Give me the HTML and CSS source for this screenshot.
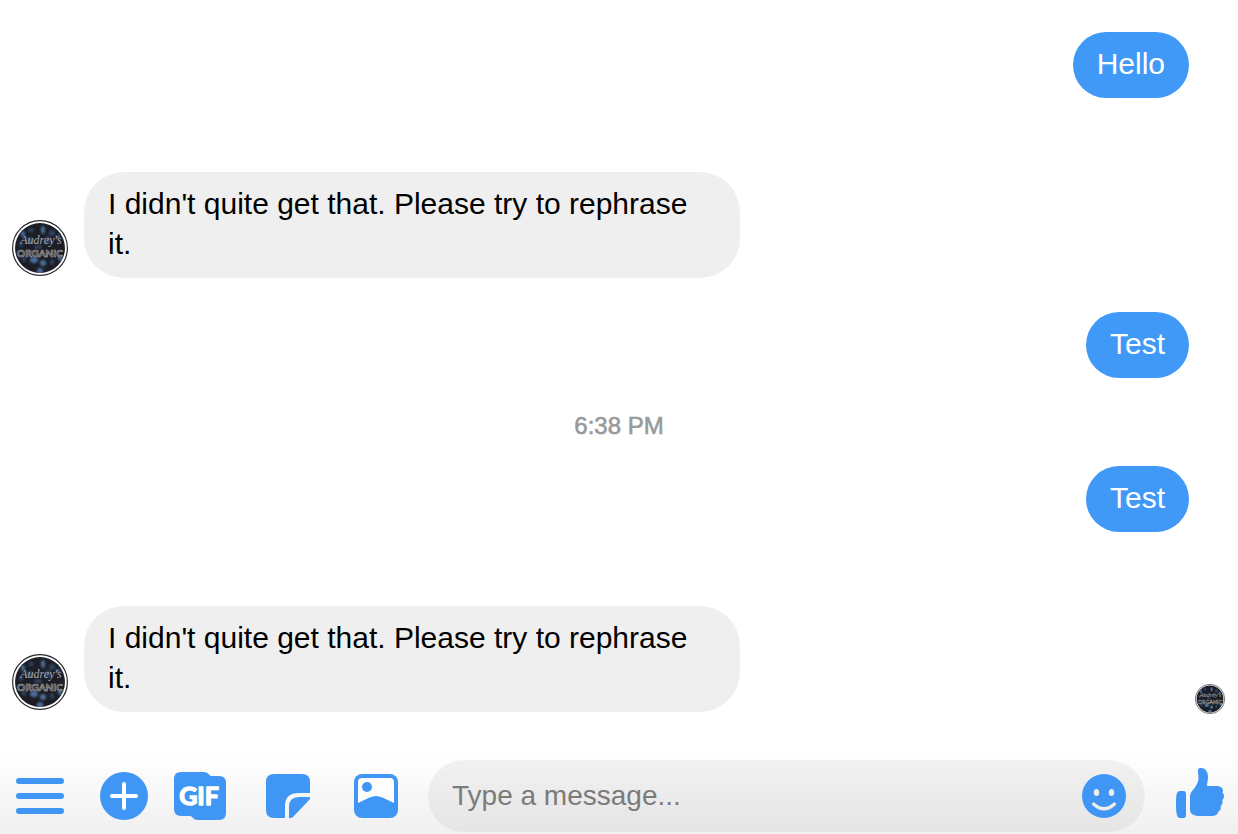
FILE: index.html
```html
<!DOCTYPE html>
<html lang="en">
<head>
<meta charset="utf-8">
<meta name="viewport" content="width=device-width, initial-scale=1">
<title>Messages</title>
<link rel="stylesheet" href="styles.css">
</head>
<body>
<svg class="defs" aria-hidden="true">
  <defs>
    <filter id="soft"><feGaussianBlur stdDeviation="1.1"/></filter>
    <clipPath id="disc"><circle cx="28" cy="28" r="25"/></clipPath>
    <symbol id="avatar" viewBox="0 0 56 56">
      <circle cx="28" cy="28" r="27.4" fill="#fff" stroke="#26272c" stroke-width="1.2"/>
      <circle cx="28" cy="28" r="25" fill="#1c1d25"/>
      <g clip-path="url(#disc)">
        <g filter="url(#soft)" fill="#4b6f9c">
          <ellipse cx="11" cy="14" rx="2" ry="3"/>
          <ellipse cx="19" cy="10" rx="3" ry="2" fill="#2d4361"/>
          <ellipse cx="31" cy="10" rx="2" ry="4"/>
          <ellipse cx="40" cy="13" rx="3" ry="3" fill="#2d4361"/>
          <ellipse cx="46" cy="17" rx="2" ry="2"/>
          <ellipse cx="9" cy="24" rx="2" ry="3" fill="#2d4361"/>
          <ellipse cx="18" cy="20" rx="3" ry="3" fill="#2d4361"/>
          <ellipse cx="36" cy="20" rx="3" ry="4" fill="#30415a"/>
          <ellipse cx="26" cy="27" rx="4" ry="2" fill="#30415a"/>
          <ellipse cx="22" cy="40" rx="4" ry="3"/>
          <ellipse cx="12" cy="39" rx="2" ry="3" fill="#2d4361"/>
          <ellipse cx="31" cy="43" rx="3" ry="3"/>
          <ellipse cx="40" cy="42" rx="2" ry="3" fill="#2d4361"/>
          <ellipse cx="28" cy="51" rx="3" ry="3"/>
          <ellipse cx="48" cy="38" rx="2" ry="3"/>
        </g>
        <text x="29" y="24" class="brand-script">Audrey's</text>
        <text x="28" y="37" class="brand-caps">ORGANIC</text>
      </g>
    </symbol>
  </defs>
</svg>

<div class="chat">
  <main class="thread">
    <div class="row row-out"><p class="bubble bubble-out">Hello</p></div>
    <div class="row row-in">
      <svg class="avatar" role="img" aria-label="Audrey's Organic"><use href="#avatar"/></svg>
      <p class="bubble bubble-in">I didn't quite get that. Please try to rephrase it.</p>
    </div>
    <div class="row row-out row-reply"><p class="bubble bubble-out">Test</p></div>
    <time class="stamp" datetime="18:38">6:38 PM</time>
    <div class="row row-out"><p class="bubble bubble-out">Test</p></div>
    <div class="row row-in">
      <svg class="avatar" role="img" aria-label="Audrey's Organic"><use href="#avatar"/></svg>
      <p class="bubble bubble-in">I didn't quite get that. Please try to rephrase it.</p>
      <svg class="seen" role="img" aria-label="Seen"><use href="#avatar"/></svg>
    </div>
  </main>

  <form class="composer">
    <button type="button" class="tool" aria-label="Menu">
      <svg width="48" height="48" viewBox="0 0 48 48"><g fill="currentColor"><rect y="6" width="48" height="6" rx="3"/><rect y="21" width="48" height="6" rx="3"/><rect y="36" width="48" height="6" rx="3"/></g></svg>
    </button>
    <button type="button" class="tool" aria-label="Add">
      <svg width="48" height="48" viewBox="0 0 48 48"><circle cx="24" cy="24" r="24" fill="currentColor"/><path d="M24 12v24M12 24h24" stroke="#fff" stroke-width="4" stroke-linecap="round"/></svg>
    </button>
    <button type="button" class="tool" aria-label="GIF">
      <svg width="52" height="48" viewBox="0 0 52 48"><path fill="currentColor" d="M7 0H29C32 0 34 1 35.500 3C36 3.700 36.800 4 38 4H45Q52 4 52 11V41Q52 48 45 48H24C21 48 19.500 47 18 45C17.500 44.300 16.500 44 15 44H7Q0 44 0 37V7Q0 0 7 0Z"/><text x="25" y="33" class="gif-label">GIF</text></svg>
    </button>
    <button type="button" class="tool" aria-label="Stickers">
      <svg width="44" height="44" viewBox="0 0 44 44"><g fill="currentColor"><path d="M8 0H36Q44 0 44 8V19H33Q19 19 19 32V44H8Q0 44 0 36V8Q0 0 8 0Z"/><path d="M23 44V33Q23 23 33 23H44V25L27 43Q26 44 24.500 44Z"/></g></svg>
    </button>
    <button type="button" class="tool" aria-label="Photo">
      <svg width="44" height="44" viewBox="0 0 44 44"><rect width="44" height="44" rx="8" fill="currentColor"/><path fill="#fdfdfd" d="M8 4H36Q40 4 40 8V29L28.500 23.500Q22 20.500 15.500 23.500L4 29V8Q4 4 8 4Z"/><circle cx="13" cy="13" r="5" fill="currentColor"/></svg>
    </button>
    <div class="field">
      <input class="field-input" type="text" aria-label="Message" placeholder="Type a message...">
      <button type="button" class="emoji" aria-label="Emoji">
        <svg width="44" height="44" viewBox="0 0 44 44"><circle cx="22" cy="22" r="22" fill="currentColor"/><g fill="#eee"><ellipse cx="14.500" cy="18.500" rx="2.700" ry="3.600"/><ellipse cx="29.500" cy="18.500" rx="2.700" ry="3.600"/></g><path d="M11.500 30Q22 39.500 32.500 30" fill="none" stroke="#eee" stroke-width="3.200" stroke-linecap="round"/></svg>
      </button>
    </div>
    <button type="button" class="tool tool-like" aria-label="Like">
      <svg width="48" height="56" viewBox="0 0 48 56"><g fill="currentColor"><path d="M3.500 23H7.500Q10 23 10 26V47Q10 50 7.500 50H3.500C1 50 0 45 0 38V33C0 27 1 23 3.500 23Z"/><path d="M22 2C22.300 0 24 0 25.500 0C29.500 0 32 4 32 9C32 12 31.200 15 31 18H40C44 18 47 20 47 22.500C47 23.500 46.600 24 46.300 24.600C47.400 25.500 48 27 48 28.500C48 30 47.300 31.200 46.300 32C46.800 33 46.700 35.500 45.800 36.700C45.300 37.500 44.800 37.800 44.500 38.200C45.200 39.500 44.800 41.500 43.800 42.500C43.300 43 42.500 43.200 42.300 43.700C42 46.500 39 48 35 48H24C19 48 14 46.500 14 42V29C14 24 17.500 22 19.500 18.500C21.500 15 22.500 13.500 22.500 10C22.500 7 21.700 4.500 22 2Z"/></g></svg>
    </button>
  </form>
</div>
</body>
</html>
```
FILE: styles.css
```css
* { box-sizing: border-box; }

body {
  margin: 0;
  background: #fff;
  color: #000;
  font-family: "Liberation Sans", Arial, sans-serif;
  font-size: 30px;
  line-height: 40px;
}

.defs { position: absolute; width: 0; height: 0; }

.chat {
  display: flex;
  flex-direction: column;
  min-height: 100vh;
}

.thread {
  flex: 1;
  display: flex;
  flex-direction: column;
  padding-top: 32px;
}

.row { display: flex; align-items: flex-end; }
.row-out { justify-content: flex-end; padding-right: 49px; }
.row-in { margin-top: 74px; padding: 0 13px 0 12px; gap: 16px; }
.row-reply { margin-top: 34px; }

.bubble { margin: 0; padding: 12px 24px 14px; }
.bubble-out { border-radius: 33px; background: #4099f7; color: #fff; }
.bubble-in { flex: 0 1 656px; border-radius: 40px; background: #efefef; }

.avatar { flex: none; width: 56px; height: 56px; margin-bottom: 2px; }
.seen { flex: none; width: 30px; height: 30px; margin-left: auto; margin-bottom: -2px; }

.brand-script {
  fill: #a5a8af;
  font-family: "Liberation Serif", serif;
  font-size: 12px;
  font-style: italic;
  text-anchor: middle;
}

.brand-caps {
  fill: #1c1d25;
  stroke: #aeb1b8;
  stroke-width: 0.6px;
  font-family: Lato, sans-serif;
  font-size: 10px;
  font-weight: 700;
  text-anchor: middle;
}

.stamp {
  align-self: center;
  margin: 36px 0 28px;
  color: #999;
  font-size: 24px;
  line-height: 24px;
  -webkit-text-stroke: 0.6px #999;
}

.composer {
  display: grid;
  grid-template-columns: 80px 88px 64px 112px 64px 1fr 93px;
  align-items: center;
  padding: 8px 0 2px;
  background: linear-gradient(#fff, #f0f0f0);
}

.tool,
.emoji {
  display: flex;
  align-items: center;
  justify-content: center;
  padding: 0;
  border: 0;
  background: none;
  color: #4096f4;
  cursor: pointer;
}

.tool-like { padding-left: 16px; }

.gif-label {
  fill: #fff;
  stroke: #fff;
  stroke-width: 1.4px;
  stroke-linejoin: round;
  font-family: Lato, sans-serif;
  font-size: 25px;
  font-weight: 700;
  text-anchor: middle;
}

.field {
  display: flex;
  align-items: center;
  height: 72px;
  margin-left: 20px;
  padding: 0 19px 0 24px;
  border-radius: 36px;
  background: linear-gradient(#f1f1f1, #e5e5e5);
}

.field-input {
  flex: 1;
  min-width: 0;
  height: 40px;
  padding: 0;
  border: 0;
  outline: 0;
  background: none;
  color: #000;
  font: inherit;
  font-size: 28px;
}

.field-input::placeholder { color: #7b7b7b; opacity: 1; }
```
